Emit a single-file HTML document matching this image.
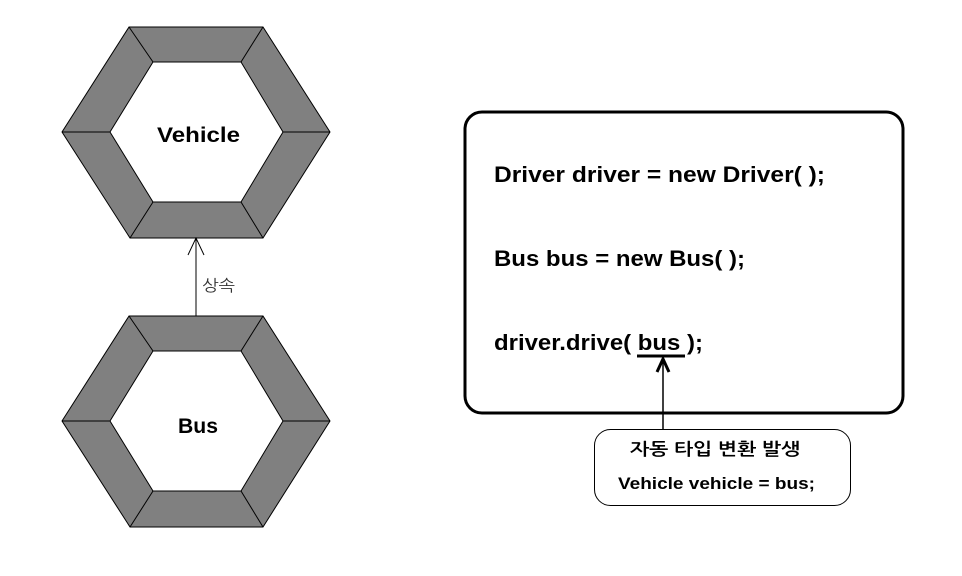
<!DOCTYPE html>
<html><head><meta charset="utf-8"><style>html,body{margin:0;padding:0;background:#fff}svg{display:block}</style></head>
<body>
<svg width="962" height="576" viewBox="0 0 962 576" xmlns="http://www.w3.org/2000/svg" font-family="Liberation Sans, NanumGothic, sans-serif" font-weight="bold">
<g id="h1" stroke="#000" stroke-width="1" fill="#808080">
<polygon points="129,27 263,27 330,132 263,238 130,238 62,132"/>
<polygon points="153,62 241,62 283,132 241,202 153,202 110,132" fill="#fff"/>
<line x1="129" y1="27" x2="153" y2="62"/><line x1="263" y1="27" x2="241" y2="62"/>
<line x1="330" y1="132" x2="283" y2="132"/><line x1="263" y1="238" x2="241" y2="202"/>
<line x1="130" y1="238" x2="153" y2="202"/><line x1="62" y1="132" x2="110" y2="132"/>
</g>
<use href="#h1" transform="translate(0,289)"/>
<text x="157" y="142" font-size="21" textLength="83" lengthAdjust="spacingAndGlyphs">Vehicle</text>
<text x="178" y="433" font-size="21" textLength="40" lengthAdjust="spacingAndGlyphs">Bus</text>
<g stroke="#000" stroke-width="1" fill="none">
<line x1="196" y1="238" x2="196" y2="316"/>
<polyline points="188,255 196,238 204,255"/>
</g>
<text x="202" y="291" font-size="16" font-weight="normal" fill="#333" font-family="NanumGothic, sans-serif" textLength="33" lengthAdjust="spacingAndGlyphs">상속</text>
<rect x="465" y="112" width="438" height="301" rx="17" fill="#fff" stroke="#000" stroke-width="3"/>
<text x="494" y="182" font-size="22" textLength="331" lengthAdjust="spacingAndGlyphs">Driver driver = new Driver( );</text>
<text x="494" y="266" font-size="22" textLength="251" lengthAdjust="spacingAndGlyphs">Bus bus = new Bus( );</text>
<text x="494" y="350" font-size="22" textLength="209" lengthAdjust="spacingAndGlyphs">driver.drive( bus );</text>
<g stroke="#000" fill="none">
<line x1="637" y1="356" x2="685" y2="356" stroke-width="3"/>
<line x1="663" y1="359" x2="663" y2="430" stroke-width="1.5"/>
<polyline points="657,372 663,359 669,372" stroke-width="3"/>
</g>
<rect x="594.5" y="429.5" width="256" height="76" rx="16" fill="#fff" stroke="#000" stroke-width="1"/>
<text x="630" y="455" font-size="17" textLength="170" lengthAdjust="spacingAndGlyphs">자동 타입 변환 발생</text>
<text x="618" y="489" font-size="17" textLength="197" lengthAdjust="spacingAndGlyphs">Vehicle vehicle = bus;</text>
</svg>
</body></html>
